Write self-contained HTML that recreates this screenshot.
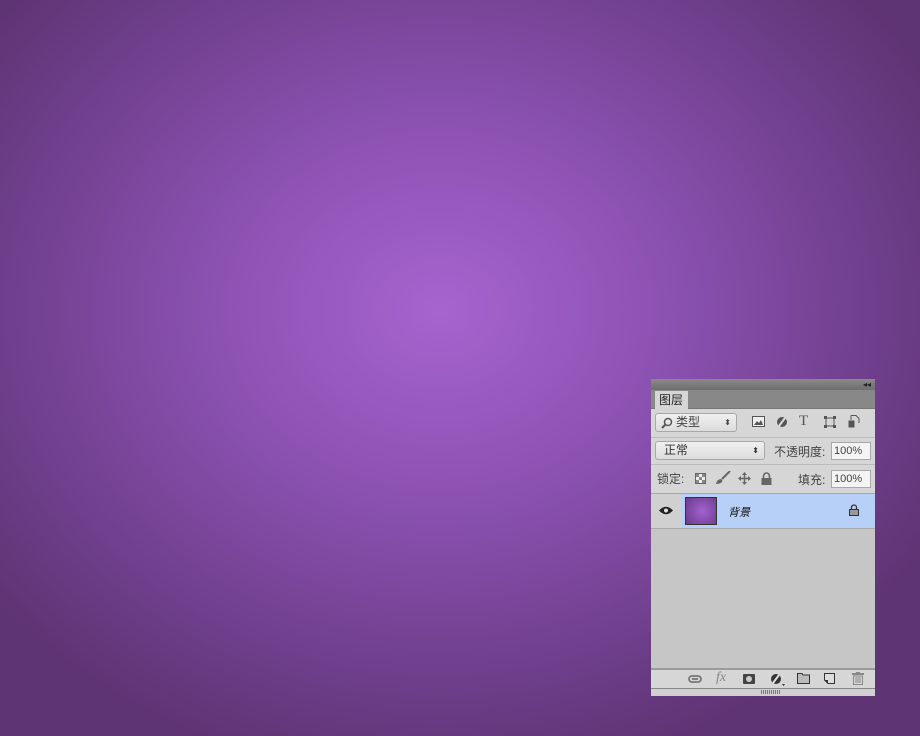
<!DOCTYPE html>
<html><head><meta charset="utf-8"><style>
*{margin:0;padding:0;box-sizing:border-box}
body{width:920px;height:736px;overflow:hidden;position:relative;
background:radial-gradient(ellipse 560px 470px at 440px 310px,#a664cf 0%,#8c52b2 40%,#71408f 75%,#5f3474 100%);
font-family:"Liberation Sans","Noto Sans CJK SC",sans-serif;font-size:12px;color:#333}
.p{position:absolute;left:651px;top:379px;width:224px;height:317px;background:#c6c6c6;overflow:hidden}
.a{position:absolute}
.dd{position:absolute;border:1px solid #a8a8a8;border-radius:3px;background:linear-gradient(#f0f0f0,#dcdcdc);height:19px;padding-left:8px;line-height:17px}
.inp{position:absolute;border:1px solid #a8a8a8;background:#f4f4f4;height:18px;width:40px;line-height:16px;font-size:11px;padding-left:2px;color:#444}
svg{position:absolute}
</style></head><body>
<div class="p">
<div class="a" style="left:0;top:0;width:224px;height:11px;background:linear-gradient(#8a8a8a,#6e6e6e)"></div>
<div class="a" style="right:4px;top:0;font-size:8px;color:#222;line-height:11px">◂◂</div>
<div class="a" style="left:0;top:11px;width:224px;height:19px;background:#888;border-bottom:1px solid #777"></div>
<div class="a" style="left:4px;top:12px;width:33px;height:18px;background:#d6d6d6;line-height:18px;padding-left:4px;color:#222">图层</div>
<div class="a" style="left:0;top:30px;width:224px;height:85px;background:#d6d6d6"></div>
<div class="a" style="left:0;top:58px;width:224px;height:1px;background:#bcbcbc"></div>
<div class="a" style="left:0;top:85px;width:224px;height:1px;background:#bcbcbc"></div>
<div class="a" style="left:0;top:114px;width:224px;height:1px;background:#a8a8a8"></div>
<div class="dd" style="left:4px;top:34px;width:82px;padding-left:20px;color:#444">类型<span style="position:absolute;right:5px;font-size:8px">⬍</span></div>
<svg style="left:10px;top:38px" width="12" height="12"><circle cx="7" cy="5" r="3.5" fill="none" stroke="#555" stroke-width="1.5"/><line x1="4.5" y1="7.5" x2="1" y2="11" stroke="#555" stroke-width="2"/></svg>
<svg style="left:101px;top:37px" width="13" height="11"><rect x="0.5" y="0.5" width="12" height="10" fill="#eee" stroke="#555"/><path d="M2 9 L5 5 L7 7 L9 4 L11 9Z" fill="#555"/></svg>
<svg style="left:125px;top:37px" width="12" height="12"><circle cx="6" cy="6" r="5" fill="#555"/><path d="M9 2 L3 10" stroke="#ddd" stroke-width="2"/></svg>
<div class="a" style="left:148px;top:34px;font-family:'Liberation Serif';font-size:15px;color:#555">T</div>
<svg style="left:173px;top:37px" width="12" height="12"><rect x="2" y="2" width="8" height="8" fill="none" stroke="#555"/><rect x="0" y="0" width="3" height="3" fill="#555"/><rect x="9" y="0" width="3" height="3" fill="#555"/><rect x="0" y="9" width="3" height="3" fill="#555"/><rect x="9" y="9" width="3" height="3" fill="#555"/></svg>
<svg style="left:197px;top:36px" width="12" height="13"><path d="M3 .5 H8 L11 3.5 V8 M3 .5 V5" fill="none" stroke="#555"/><rect x="0.5" y="5.5" width="6" height="7" fill="#555"/></svg>
<div class="dd" style="left:4px;top:62px;width:110px">正常<span style="position:absolute;right:5px;font-size:8px">⬍</span></div>
<div class="a" style="left:123px;top:64px;color:#444">不透明度:</div>
<div class="inp" style="left:180px;top:63px">100%</div>
<div class="a" style="left:6px;top:91px;color:#444">锁定:</div>
<svg style="left:44px;top:94px" width="11" height="11"><rect x=".5" y=".5" width="10" height="10" fill="#eee" stroke="#666"/><rect x="1" y="1" width="3" height="3" fill="#888"/><rect x="7" y="1" width="3" height="3" fill="#888"/><rect x="4" y="4" width="3" height="3" fill="#888"/><rect x="1" y="7" width="3" height="3" fill="#888"/><rect x="7" y="7" width="3" height="3" fill="#888"/></svg>
<svg style="left:64px;top:92px" width="16" height="14"><path d="M15 0 L7 8" stroke="#666" stroke-width="2"/><path d="M1 13 Q2 8 6 8 Q8 9 7 11 Q5 13 1 13Z" fill="#666"/></svg>
<svg style="left:87px;top:93px" width="13" height="13"><path d="M6.5 0 L9 3 H4Z M6.5 13 L9 10 H4Z M0 6.5 L3 4 V9Z M13 6.5 L10 4 V9Z" fill="#666"/><path d="M6.5 2 V11 M2 6.5 H11" stroke="#666" stroke-width="1.5"/></svg>
<svg style="left:110px;top:93px" width="11" height="13"><path d="M2.5 6 V4 A3 3 0 0 1 8.5 4 V6" fill="none" stroke="#666" stroke-width="1.6"/><rect x="0.5" y="6" width="10" height="7" fill="#666"/></svg>
<div class="a" style="left:147px;top:92px;color:#444">填充:</div>
<div class="inp" style="left:180px;top:91px">100%</div>
<div class="a" style="left:0;top:115px;width:30px;height:34px;background:#d0d0d0"></div>
<div class="a" style="left:30px;top:115px;width:194px;height:34px;background:#b7d0f7"></div>
<svg style="left:8px;top:127px" width="14" height="9"><path d="M0 4.5 Q7 -3 14 4.5 Q7 12 0 4.5Z" fill="#222"/><circle cx="7" cy="4.5" r="2" fill="#ddd"/></svg>
<div class="a" style="left:34px;top:118px;width:32px;height:28px;border:1px solid #333;background:radial-gradient(circle at 55% 50%,#a262cf,#6a3a8a)"></div>
<div class="a" style="left:77px;top:125px;font-style:italic;font-size:11px;color:#111">背景</div>
<svg style="left:198px;top:125px" width="10" height="12"><path d="M2.5 5 V3.5 A2.5 2.5 0 0 1 7.5 3.5 V5" fill="none" stroke="#333" stroke-width="1.3"/><rect x="0.5" y="5.5" width="9" height="6" fill="#999" stroke="#333"/></svg>
<div class="a" style="left:0;top:149px;width:224px;height:1px;background:#aaa"></div>
<div class="a" style="left:0;top:289px;width:224px;height:2px;background:#9a9a9a"></div>
<div class="a" style="left:0;top:291px;width:224px;height:18px;background:#d6d6d6"></div>
<svg style="left:37px;top:296px" width="14" height="8"><rect x="1" y="1" width="12" height="6" rx="3" fill="none" stroke="#777" stroke-width="1.8"/><line x1="4" y1="4" x2="10" y2="4" stroke="#777" stroke-width="1.8"/></svg>
<div class="a" style="left:65px;top:291px;color:#888;font-style:italic;font-family:'Liberation Serif';font-size:14px">fx</div>
<div class="a" style="left:92px;top:295px;width:12px;height:10px;background:#444;border-radius:1px"><div style="margin:2px auto;width:6px;height:6px;border-radius:50%;background:#ccc"></div></div>
<svg style="left:119px;top:294px" width="16" height="14"><circle cx="6" cy="6" r="5" fill="#333"/><path d="M9 2 L3 10" stroke="#ddd" stroke-width="2"/><path d="M12 11 H15 L13.5 13Z" fill="#333"/></svg>
<svg style="left:146px;top:294px" width="13" height="11"><path d="M.5 .5 H5 L6 2 H12.5 V10.5 H.5Z" fill="#bbb" stroke="#333"/></svg>
<svg style="left:173px;top:294px" width="11" height="11"><path d="M.5 .5 H10.5 V10.5 H4 L.5 7Z" fill="#ddd" stroke="#333"/><path d="M.5 7 H4 V10.5" fill="#333"/></svg>
<svg style="left:201px;top:293px" width="12" height="13"><rect x="0" y="1" width="12" height="2" fill="#888"/><rect x="4" y="0" width="4" height="2" fill="#888"/><path d="M1.5 4 H10.5 V12.5 H1.5Z" fill="none" stroke="#888"/><path d="M4 5 V11 M6 5 V11 M8 5 V11" stroke="#888"/></svg>
<div class="a" style="left:0;top:309px;width:224px;height:1px;background:#888"></div>
<div class="a" style="left:0;top:310px;width:224px;height:7px;background:#d0d0d0"></div>
<div class="a" style="left:110px;top:311px;width:20px;height:4px;background:repeating-linear-gradient(90deg,#777 0 1px,transparent 1px 2px)"></div>
</div>
</body></html>
